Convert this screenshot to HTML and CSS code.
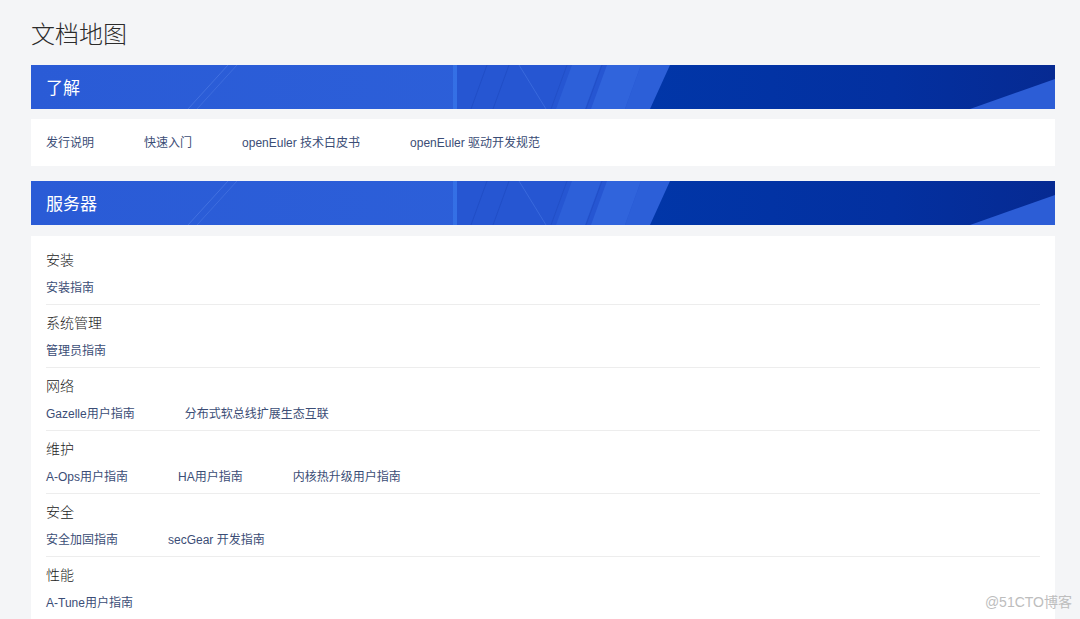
FILE: index.html
```html
<!DOCTYPE html>
<html lang="zh-CN">
<head>
<meta charset="utf-8">
<title>文档地图</title>
<link rel="stylesheet" href="styles.css">
</head>
<body>
<div class="page">
  <h1 class="page-title">文档地图</h1>

  <section class="group">
    <div class="banner">
      <svg class="banner-bg" viewBox="0 0 1024 44" preserveAspectRatio="none" aria-hidden="true">
        <defs>
          <linearGradient id="g1" x1="0" y1="0" x2="1" y2="0">
            <stop offset="0" stop-color="#2a5bd6"/>
            <stop offset="1" stop-color="#2f64dc"/>
          </linearGradient>
          <linearGradient id="g2" x1="0" y1="0" x2="1" y2="0">
            <stop offset="0" stop-color="#0136a8"/>
            <stop offset="0.6" stop-color="#0330a0"/>
            <stop offset="1" stop-color="#062a92"/>
          </linearGradient>
        </defs>
        <rect x="0" y="0" width="1024" height="44" fill="url(#g1)"/>
        <line x1="157" y1="44" x2="197" y2="0" stroke="#5a86ea" stroke-width="1" opacity="0.5"/>
        <line x1="166" y1="44" x2="206" y2="0" stroke="#5a86ea" stroke-width="1" opacity="0.4"/>
        <rect x="422" y="0" width="4" height="44" fill="#3a7bee" opacity="0.6"/>
        <rect x="426" y="0" width="215" height="44" fill="#2656d2"/>
        <polygon points="525,44 541,0 570,0 554,44" fill="#2d60d9"/>
        <polygon points="560,44 576,0 610,0 594,44" fill="#3064dc"/>
        <polygon points="594,44 610,0 645,0 629,44" fill="#2c5fd8"/>
        <line x1="440" y1="44" x2="456" y2="0" stroke="#214ec6" stroke-width="1"/>
        <line x1="462" y1="44" x2="478" y2="0" stroke="#214ec6" stroke-width="1"/>
        <line x1="488" y1="0" x2="515" y2="44" stroke="#4676e4" stroke-width="1" opacity="0.6"/>
        <line x1="520" y1="44" x2="536" y2="0" stroke="#224fc7" stroke-width="1"/>
        <line x1="555" y1="44" x2="571" y2="0" stroke="#224fc7" stroke-width="1"/>
        <polygon points="639,0 1024,0 1024,44 619,44" fill="url(#g2)"/>
        <polygon points="939,44 1024,14 1024,44" fill="#2c5dd6"/>
      </svg>
      <h2 class="banner-title">了解</h2>
    </div>
    <div class="card card-flat">
      <div class="links">
        <a class="link">发行说明</a>
        <a class="link">快速入门</a>
        <a class="link">openEuler 技术白皮书</a>
        <a class="link">openEuler 驱动开发规范</a>
      </div>
    </div>
  </section>

  <section class="group">
    <div class="banner">
      <svg class="banner-bg" viewBox="0 0 1024 44" preserveAspectRatio="none" aria-hidden="true">
        <rect x="0" y="0" width="1024" height="44" fill="url(#g1)"/>
        <line x1="157" y1="44" x2="197" y2="0" stroke="#5a86ea" stroke-width="1" opacity="0.5"/>
        <line x1="166" y1="44" x2="206" y2="0" stroke="#5a86ea" stroke-width="1" opacity="0.4"/>
        <rect x="422" y="0" width="4" height="44" fill="#3a7bee" opacity="0.6"/>
        <rect x="426" y="0" width="215" height="44" fill="#2656d2"/>
        <polygon points="525,44 541,0 570,0 554,44" fill="#2d60d9"/>
        <polygon points="560,44 576,0 610,0 594,44" fill="#3064dc"/>
        <polygon points="594,44 610,0 645,0 629,44" fill="#2c5fd8"/>
        <line x1="440" y1="44" x2="456" y2="0" stroke="#214ec6" stroke-width="1"/>
        <line x1="462" y1="44" x2="478" y2="0" stroke="#214ec6" stroke-width="1"/>
        <line x1="488" y1="0" x2="515" y2="44" stroke="#4676e4" stroke-width="1" opacity="0.6"/>
        <line x1="520" y1="44" x2="536" y2="0" stroke="#224fc7" stroke-width="1"/>
        <line x1="555" y1="44" x2="571" y2="0" stroke="#224fc7" stroke-width="1"/>
        <polygon points="639,0 1024,0 1024,44 619,44" fill="url(#g2)"/>
        <polygon points="939,44 1024,14 1024,44" fill="#2c5dd6"/>
      </svg>
      <h2 class="banner-title">服务器</h2>
    </div>
    <div class="card card-sections">
      <div class="sub">
        <h3 class="sub-title">安装</h3>
        <div class="links"><a class="link">安装指南</a></div>
      </div>
      <div class="sub">
        <h3 class="sub-title">系统管理</h3>
        <div class="links"><a class="link">管理员指南</a></div>
      </div>
      <div class="sub">
        <h3 class="sub-title">网络</h3>
        <div class="links"><a class="link">Gazelle用户指南</a><a class="link">分布式软总线扩展生态互联</a></div>
      </div>
      <div class="sub">
        <h3 class="sub-title">维护</h3>
        <div class="links"><a class="link">A-Ops用户指南</a><a class="link">HA用户指南</a><a class="link">内核热升级用户指南</a></div>
      </div>
      <div class="sub">
        <h3 class="sub-title">安全</h3>
        <div class="links"><a class="link">安全加固指南</a><a class="link">secGear 开发指南</a></div>
      </div>
      <div class="sub">
        <h3 class="sub-title">性能</h3>
        <div class="links"><a class="link">A-Tune用户指南</a></div>
      </div>
    </div>
  </section>
</div>
<div class="watermark">@51CTO博客</div>
</body>
</html>
```

FILE: styles.css
```css
* { box-sizing: border-box; }

html, body {
  margin: 0;
  padding: 0;
  height: 100%;
  overflow: hidden;
}

body {
  background: #f4f5f7;
  font-family: "Noto Sans CJK SC", "Noto Sans", "Liberation Sans", sans-serif;
  color: #333;
}

.page {
  padding: 17px 25px 0 31px;
}

.page-title {
  margin: 0 0 16px 0;
  font-size: 24px;
  line-height: 32px;
  font-weight: 300;
  color: #2b2b2b;
}

.group {
  margin-bottom: 15px;
}

.banner {
  position: relative;
  height: 44px;
  display: flex;
  align-items: center;
  padding-left: 15px;
  overflow: hidden;
}

.banner-bg {
  position: absolute;
  left: 0;
  top: 0;
  width: 100%;
  height: 100%;
  display: block;
}

.banner-title {
  position: relative;
  margin: 0;
  font-size: 17px;
  font-weight: 400;
  color: #fff;
  line-height: 24px;
}

.card {
  background: #fff;
  padding: 0 15px;
}

.card-flat {
  margin-top: 10px;
  height: 47px;
  display: flex;
  align-items: center;
}

.card-sections {
  margin-top: 11px;
  padding-top: 6px;
  padding-bottom: 7px;
}

.links {
  display: flex;
  gap: 50px;
  align-items: center;
}

.link {
  font-family: "Liberation Sans", "Noto Sans CJK SC", sans-serif;
  font-size: 12px;
  line-height: 20px;
  color: #3b4d76;
  text-decoration: none;
  white-space: nowrap;
}

.sub {
  padding: 7px 0 6px 0;
  border-bottom: 1px solid #ededed;
}

.sub:last-child {
  border-bottom: none;
}

.sub-title {
  margin: 0 0 9px 0;
  font-size: 14px;
  line-height: 20px;
  font-weight: 300;
  color: #222;
}

.watermark {
  position: absolute;
  right: 8px;
  bottom: 8px;
  font-family: "Liberation Sans", "Noto Sans CJK SC", sans-serif;
  font-size: 14px;
  color: #bdbdbd;
  line-height: 18px;
}
```
